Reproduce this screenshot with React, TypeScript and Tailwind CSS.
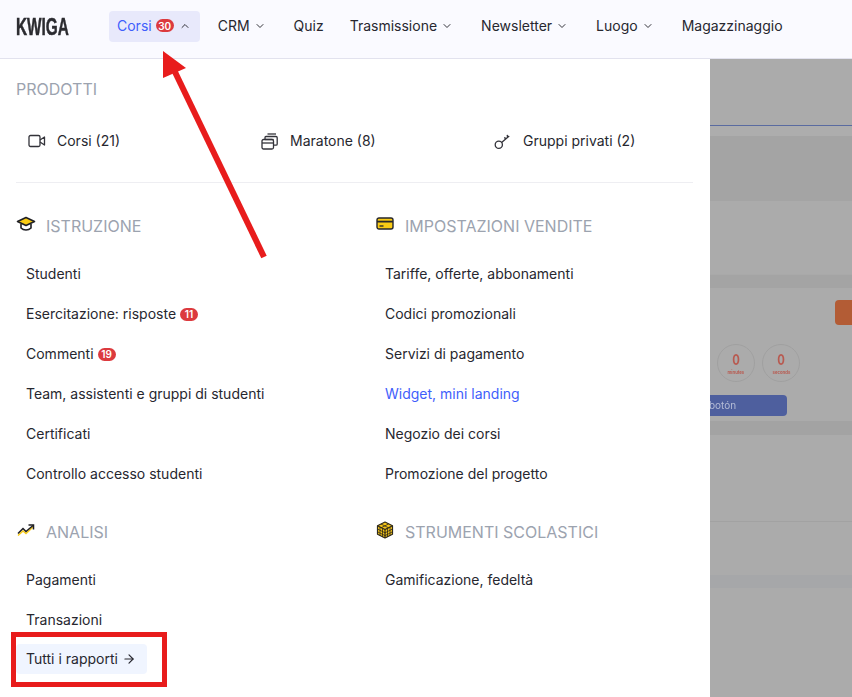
import { ChevronDown, ChevronUp, ArrowRight } from "lucide-react";
import type { ReactNode } from "react";

const navItems = [
  { label: "CRM", chevron: true },
  { label: "Quiz", chevron: false },
  { label: "Trasmissione", chevron: true },
  { label: "Newsletter", chevron: true },
  { label: "Luogo", chevron: true },
  { label: "Magazzinaggio", chevron: false },
];

function Badge({ children }: { children: ReactNode }) {
  return (
    <span className="ml-1 inline-flex h-[13px] w-[18px] items-center justify-center rounded-full bg-[#dc3a3e] text-[10px] font-semibold leading-none text-white">
      {children}
    </span>
  );
}

function MenuLink({ children, color = "text-[#27272f]" }: { children: ReactNode; color?: string }) {
  return <a className={`flex h-10 items-center px-2.5 text-sm ${color}`}>{children}</a>;
}

function SectionTitle({ icon, children }: { icon: ReactNode; children: ReactNode }) {
  return (
    <div className="flex h-6 items-center">
      <span className="flex w-[30px] -translate-y-0.5 items-center">{icon}</span>
      <span className="text-base text-[#9ca3af]">{children}</span>
    </div>
  );
}

function VideoIcon() {
  return (
    <svg width="18" height="14" viewBox="0 0 18 14" fill="none" stroke="#33333a" strokeWidth="1.3">
      <rect x="1" y="1.5" width="11" height="11" rx="1.5" />
      <path d="M12 6l4.500-3v8L12 8" strokeLinejoin="round" />
    </svg>
  );
}

function StackIcon() {
  return (
    <svg width="18" height="17" viewBox="0 0 18 17" fill="none" stroke="#33333a" strokeWidth="1.3">
      <rect x="1" y="6.500" width="11.500" height="9.500" rx="1.500" />
      <path d="M1 10h11.500" />
      <path d="M4 6.500V4.500C4 3.900 4.500 3.500 5 3.500h10c.6 0 1.200.5 1.200 1.200V11c0 .6-.5 1.200-1.200 1.200h-2.500" />
      <path d="M6.500 1h8.500" />
      <path d="M4 6.500h8.500" />
    </svg>
  );
}

function KeyIcon() {
  return (
    <svg width="17" height="17" viewBox="0 0 17 17" fill="none" stroke="#33333a" strokeWidth="1.3">
      <circle cx="4.800" cy="11.800" r="3.600" />
      <path d="M7.600 9.600l7.600-6.600M11.200 6.400l-.4-2.400M13.600 4.400l-.4-2.600" />
    </svg>
  );
}

function CapIcon() {
  return (
    <svg width="20" height="16" viewBox="0 0 20 16">
      <path d="M10 1.500L1.500 5.500 10 9.500l8.500-4z" fill="#facc15" stroke="#1f1f24" strokeWidth="1.6" strokeLinejoin="round" />
      <path d="M5 8v4c1.500 1.500 3.300 2 5 2s3.500-.5 5-2V8" fill="none" stroke="#1f1f24" strokeWidth="1.6" />
    </svg>
  );
}

function CardIcon() {
  return (
    <svg className="ml-px" width="18" height="14" viewBox="0 0 18 14">
      <rect x="1" y="1" width="16" height="11" rx="2" fill="#facc15" stroke="#26262b" strokeWidth="1.4" />
      <path d="M1 4.600h16" stroke="#26262b" strokeWidth="1.800" />
      <path d="M3.500 9h4" stroke="#26262b" strokeWidth="1.300" />
    </svg>
  );
}

function TrendIcon() {
  return (
    <svg className="ml-px" width="18" height="13" viewBox="0 0 18 13" fill="none" strokeWidth="1.500">
      <path d="M1 11.500l5-4.500 3 2.500 7-6.500" stroke="#facc15" />
      <path d="M1 9.500l5-5 3 3 7-6" stroke="#1f1f24" />
      <path d="M11.500 1h5v4.500" stroke="#1f1f24" />
    </svg>
  );
}

function CubeIcon() {
  return (
    <svg className="ml-px" width="18" height="18" viewBox="0 0 18 18" stroke="#2f2a1c" strokeWidth="1.200">
      <path d="M9 1l7.500 3.800v8.400L9 17l-7.500-3.800V4.800z" fill="#f5c518" strokeLinejoin="round" />
      <path d="M1.500 4.800L9 8.600l7.500-3.800M9 8.600V17" fill="none" />
      <path d="M5 3l7.500 3.800M12.500 3L5 6.800M4 6v9M6.500 7.300v8.800M11.500 7.300v8.800M14 6v9M1.500 8l7.500 3.800L16.500 8M1.500 10.800L9 14.600l7.500-3.800" fill="none" strokeWidth="0.800" />
    </svg>
  );
}

function Timer({ label }: { label: string }) {
  return (
    <div className="flex h-[38px] w-[38px] shrink-0 flex-col items-center justify-center rounded-full border border-[#a0a0a0]">
      <span className="scale-x-75 text-[15px] font-bold leading-none text-[#b85a50]">0</span>
      <span className="mt-[3px] scale-x-[0.85] text-[5px] font-bold leading-none text-[#b85a50]">{label}</span>
    </div>
  );
}

// blurred page behind the open menu
function Backdrop() {
  return (
    <div className="flex-1 overflow-hidden bg-[#ababab]">
      <div className="h-[67px] border-b border-[#5a6ba0]" />
      <div className="h-[10px] bg-[#adadad]" />
      <div className="h-[65px] bg-[#a4a4a4]" />
      <div className="h-[74px] border-b border-[#a9a9a9] bg-[#ababab]" />
      <div className="h-[13px] bg-[#a4a4a4]" />
      <div className="h-[133px] pt-3 blur-[0.7px]">
        <div className="flex justify-end">
          <div className="h-[25px] w-[17px] rounded-l-sm bg-[#b35c35]" />
        </div>
        <div className="ml-[-38px] mt-[19px] flex gap-[7px]">
          <div className="h-[38px] w-[38px] shrink-0 rounded-full border border-[#a0a0a0]" />
          <Timer label="minutes" />
          <Timer label="seconds" />
        </div>
        <div className="mt-[13px] flex h-[21px] w-[77px] items-center rounded-r-[4px] bg-[#4e5f9e] text-[10px] text-[#b5bcd6]">
          <span className="-ml-px">botón</span>
        </div>
      </div>
      <div className="h-[14px] bg-[#a3a3a3]" />
      <div className="h-[87px] border-b border-[#a2a2a2]" />
      <div className="h-[53px]" />
      <div className="h-[13px] bg-[#a6a7a9]" />
    </div>
  );
}

function Annotations() {
  return (
    <>
      <svg className="pointer-events-none absolute left-0 top-0" width="852" height="697" viewBox="0 0 852 697">
        <path d="M175 72L264 257" stroke="#e81c1c" strokeWidth="6" fill="none" />
        <path d="M163 51L186 68L163 78z" fill="#e81c1c" />
      </svg>
      <div className="pointer-events-none absolute left-[11px] top-[632px] h-[55px] w-[156px] border-[5px] border-[#e81c1c]" />
    </>
  );
}

export default function App() {
  return (
    <div className="relative h-[697px] w-[852px] overflow-hidden bg-white font-['Inter',sans-serif]">
      <header className="flex h-[59px] items-center border-b border-[#e2e2ee] bg-[#fafaff] pb-[5px] pl-4">
        <span className="w-[85px] origin-left scale-x-[0.64] font-['Liberation_Sans',sans-serif] text-[24px] font-bold text-[#2b2b30] [-webkit-text-stroke:0.5px_#2b2b30]">
          KWIGA
        </span>
        <nav className="ml-2 flex items-center gap-2.5 text-sm text-[#27272f]">
          <a className="flex h-[31px] items-center rounded-[4px] bg-[#e8e9fb] pb-0.5 pl-2 pr-[9px] text-[#3f5efb]">
            Corsi
            <Badge>30</Badge>
            <ChevronUp className="ml-[5px] text-[#33333a]" size={12} />
          </a>
          {navItems.map((item) => (
            <a key={item.label} className="flex h-[31px] items-center px-2 pb-0.5">
              {item.label}
              {item.chevron && <ChevronDown className="ml-1 mr-0.5 text-[#33333a]" size={12} />}
            </a>
          ))}
        </nav>
      </header>

      <div className="flex h-[638px]">
        <main className="w-[710px] bg-white pl-4 pr-[17px]">
          <div className="pt-[18px] text-base leading-6 text-[#9ca3af]">PRODOTTI</div>
          <div className="mt-[28px] grid grid-cols-[233px_233px_1fr] border-b border-[#eeeef2] pb-[29px] pl-3 text-sm text-[#27272f]">
            <div className="flex h-6 items-center gap-[11px]"><VideoIcon />Corsi (21)</div>
            <div className="flex h-6 items-center gap-[11px]"><StackIcon />Maratone (8)</div>
            <div className="flex h-6 items-center gap-3"><KeyIcon />Gruppi privati (2)</div>
          </div>

          <div className="mt-[31px] grid grid-cols-[359px_1fr]">
            <section>
              <SectionTitle icon={<CapIcon />}>ISTRUZIONE</SectionTitle>
              <div className="mt-4">
                <MenuLink>Studenti</MenuLink>
                <MenuLink>Esercitazione: risposte<Badge>11</Badge></MenuLink>
                <MenuLink>Commenti<Badge>19</Badge></MenuLink>
                <MenuLink>Team, assistenti e gruppi di studenti</MenuLink>
                <MenuLink>Certificati</MenuLink>
                <MenuLink>Controllo accesso studenti</MenuLink>
              </div>
            </section>
            <section>
              <SectionTitle icon={<CardIcon />}>IMPOSTAZIONI VENDITE</SectionTitle>
              <div className="mt-4">
                <MenuLink>Tariffe, offerte, abbonamenti</MenuLink>
                <MenuLink>Codici promozionali</MenuLink>
                <MenuLink>Servizi di pagamento</MenuLink>
                <MenuLink color="text-[#3f5efb]">Widget, mini landing</MenuLink>
                <MenuLink>Negozio dei corsi</MenuLink>
                <MenuLink>Promozione del progetto</MenuLink>
              </div>
            </section>
            <section className="mt-[26px]">
              <SectionTitle icon={<TrendIcon />}>ANALISI</SectionTitle>
              <div className="mt-4">
                <MenuLink>Pagamenti</MenuLink>
                <MenuLink>Transazioni</MenuLink>
                <a className="mt-1 flex h-[30px] w-[131px] items-center gap-1 whitespace-nowrap rounded-[4px] bg-[#f0f5ff] pl-2.5 text-sm text-[#27272f]">
                  Tutti i rapporti
                  <ArrowRight size={14} />
                </a>
              </div>
            </section>
            <section className="mt-[26px]">
              <SectionTitle icon={<CubeIcon />}>STRUMENTI SCOLASTICI</SectionTitle>
              <div className="mt-4">
                <MenuLink>Gamificazione, fedeltà</MenuLink>
              </div>
            </section>
          </div>
        </main>
        <Backdrop />
      </div>
      <Annotations />
    </div>
  );
}
